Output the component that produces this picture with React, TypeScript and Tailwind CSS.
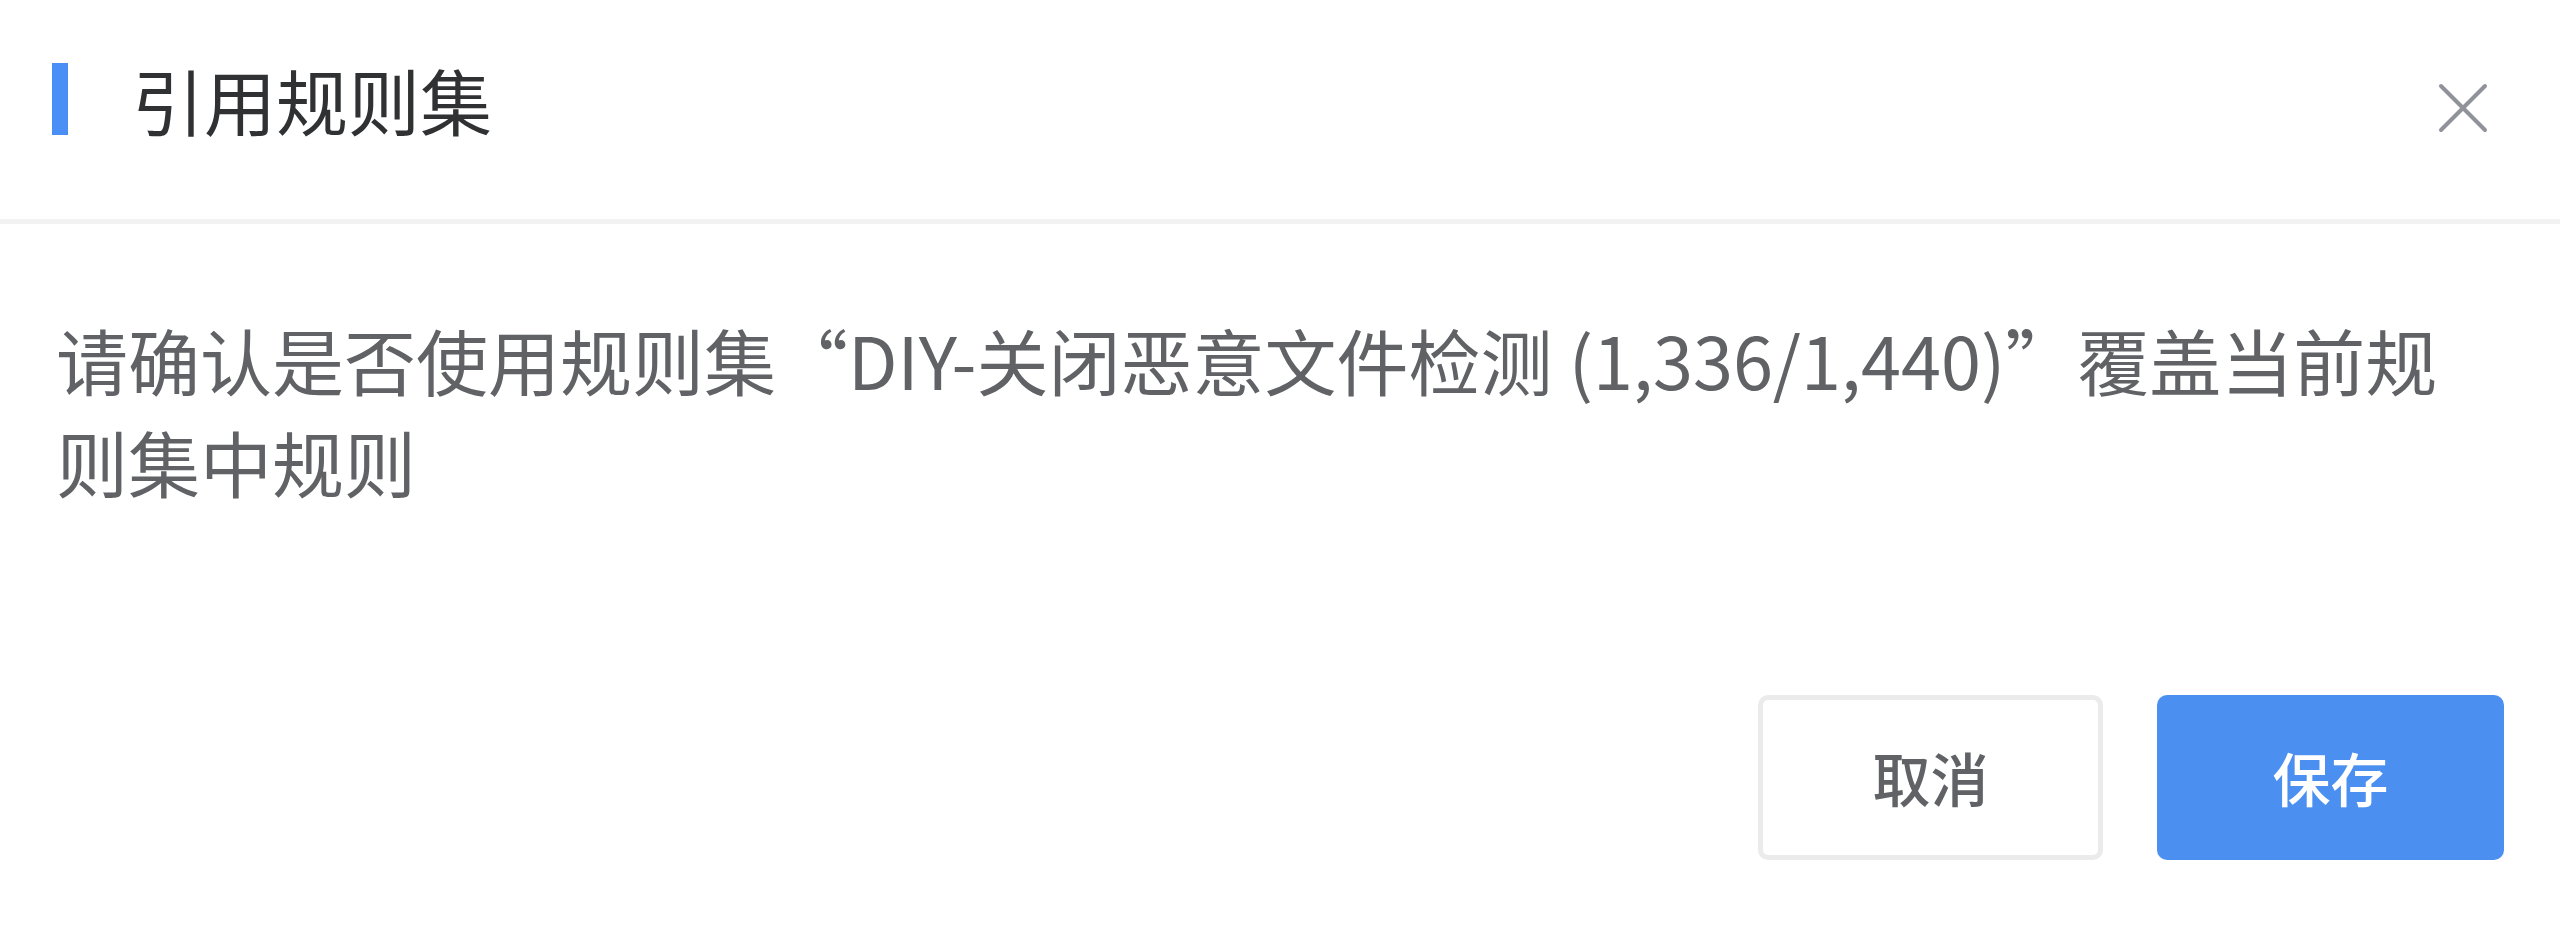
import React from "react";

const font = { fontFamily: '"Noto Sans CJK SC", "Noto Sans", sans-serif' };

export default function App() {
  return (
    <div className="w-[2560px] h-[930px] bg-white flex flex-col" style={font}>
      <div className="h-[224px] border-b-[5px] border-[#f2f2f2] flex items-start justify-between pt-[49px] pl-[52px] pr-[72px]">
        <div className="flex items-center h-[100px]">
          <div className="w-[16px] h-[72px] bg-[#4a8ff5]" />
          <span className="ml-[64px] text-[72px] leading-[100px] text-[#303133]">引用规则集</span>
        </div>
        <button className="mt-[34px] w-[50px] h-[50px] text-[#909399]">
          <svg viewBox="0 0 50 50" className="w-full h-full" fill="none" stroke="currentColor" strokeWidth="4" strokeLinecap="round">
            <path d="M3 3 L47 47 M47 3 L3 47" />
          </svg>
        </button>
      </div>

      <div className="flex-1 flex flex-col px-[56px] pt-[84px]">
        <p className="text-[72px] leading-[102px] text-[#606266]">
          请确认是否使用规则集“DIY-关闭恶意文件检测 (1,336/1,440)”覆盖当前规则集中规则
        </p>
        <div className="mt-auto mb-[70px] flex justify-end gap-[54px]">
          <button className="w-[345px] h-[165px] rounded-[10px] border-[5px] border-[#ebebeb] bg-white text-[58px] font-medium text-[#606266]">
            取消
          </button>
          <button className="w-[347px] h-[165px] rounded-[10px] bg-[#4b8ff0] text-[58px] font-medium text-white">
            保存
          </button>
        </div>
      </div>
    </div>
  );
}
